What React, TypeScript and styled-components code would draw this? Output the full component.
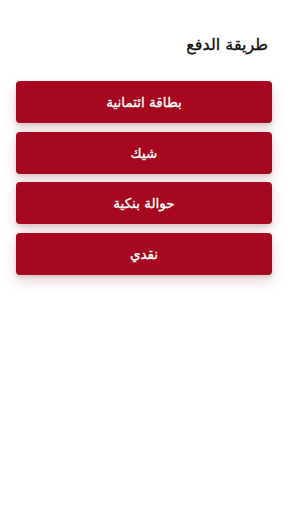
import React from "react";
import styled, { createGlobalStyle } from "styled-components";

const GlobalStyle = createGlobalStyle`
  html, body {
    margin: 0;
    padding: 0;
    background: #ffffff;
  }
  body {
    font-family: "DejaVu Sans", "Noto Sans", sans-serif;
  }
`;

const Page = styled.div`
  width: 288px;
  min-height: 512px;
  box-sizing: border-box;
  padding: 34px 16px 0;
  direction: rtl;
  background: #fff;
`;

const Title = styled.h1`
  margin: 0 4px 0 0;
  font-size: 16px;
  font-weight: 400;
  -webkit-text-stroke: 0.35px #111;
  color: #111;
  line-height: 22px;
`;

const MethodList = styled.div`
  margin-top: 25px;
  display: flex;
  flex-direction: column;
  gap: 8.5px;
`;

const MethodButton = styled.button`
  height: 42px;
  width: 100%;
  border: none;
  border-radius: 4px;
  background: #a60820;
  color: #fff;
  font-family: inherit;
  font-size: 13.5px;
  font-weight: 400;
  -webkit-text-stroke: 0.3px #fff;
  cursor: pointer;
  box-shadow: 0 6px 14px rgba(150, 20, 30, 0.18), 0 2px 4px rgba(0, 0, 0, 0.12);
`;

const methods = ["بطاقة ائتمانية", "شيك", "حوالة بنكية", "نقدي"];

export default function App() {
  return (
    <>
      <GlobalStyle />
      <Page>
        <Title>طريقة الدفع</Title>
        <MethodList>
          {methods.map((m) => (
            <MethodButton key={m}>{m}</MethodButton>
          ))}
        </MethodList>
      </Page>
    </>
  );
}
